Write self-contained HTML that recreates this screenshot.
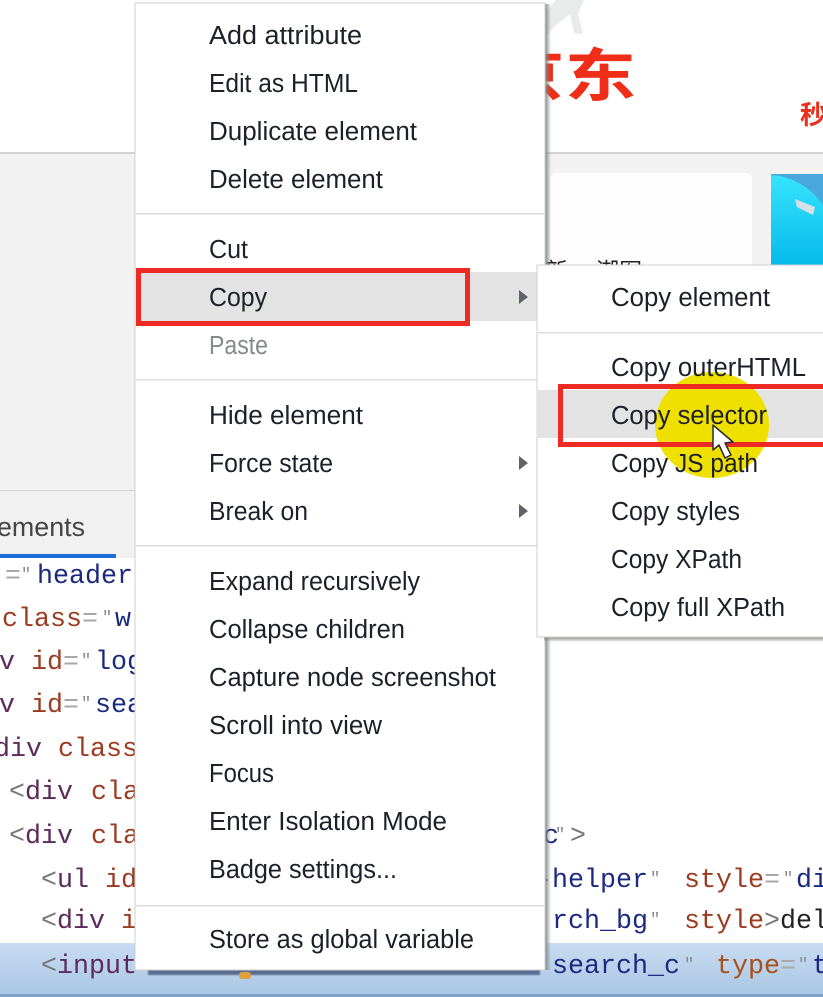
<!DOCTYPE html>
<html lang="zh">
<head>
<meta charset="utf-8">
<title>Copy selector</title>
<style>
html,body{margin:0;padding:0;background:#fff;width:823px;height:997px;overflow:hidden}
svg{display:block}
.m text{font-family:"Liberation Sans","Noto Sans CJK SC",sans-serif;font-size:25.5px;fill:#1c2028}
.c text{font-family:"Liberation Mono","DejaVu Sans Mono",monospace;font-size:26.67px;white-space:pre}
.r{fill:#9c3b22}.n{fill:#1b2a80}.g{fill:#a8a8a8}.p{fill:#5c2a5c}.k{fill:#777}.o{fill:#a8501c}.d{fill:#222}
.q{fill:#8a8a8a;font-size:17px}
</style>
</head>
<body>
<svg width="823" height="997" viewBox="0 0 823 997" xmlns="http://www.w3.org/2000/svg">
<defs>
<linearGradient id="sel" x1="0" y1="0" x2="0" y2="1"><stop offset="0" stop-color="#c8dcf2"/><stop offset="1" stop-color="#a9c5e2"/></linearGradient>
<linearGradient id="tile" x1="0" y1="0" x2="0" y2="1"><stop offset="0" stop-color="#37e4fc"/><stop offset="1" stop-color="#02b6e8"/></linearGradient>
<linearGradient id="sh" x1="0" y1="0" x2="1" y2="0"><stop offset="0" stop-color="#7f8785"/><stop offset="1" stop-color="#7f8785" stop-opacity="0"/></linearGradient>
<linearGradient id="shv" x1="0" y1="0" x2="0" y2="1"><stop offset="0" stop-color="#8a8a86"/><stop offset="1" stop-color="#8a8a86" stop-opacity="0"/></linearGradient>
<filter id="b"><feGaussianBlur stdDeviation="0.8"/></filter>
</defs>

<!-- page background -->
<rect width="823" height="997" fill="#fff"/>
<rect x="0" y="153" width="823" height="337" fill="#f2f2f3"/>
<rect x="0" y="152" width="823" height="2" fill="#d2d2d2"/>
<rect x="550" y="173" width="202" height="100" rx="6" fill="#fdfdfd"/>

<!-- logo -->
<path d="M556 0 L584 0 L578 14 L583 34 L574 33 L570 14 L556 25 L546 35 L546 12 Z" fill="#e9ebeb"/>
<text transform="translate(493 96) scale(1.12 0.9)" font-family="'Noto Sans CJK SC',sans-serif" font-size="64" font-weight="700" fill="#f02d16">京东</text>
<text x="800" y="124" font-family="'Noto Sans CJK SC',sans-serif" font-size="26" font-weight="700" fill="#e8301c">秒</text>

<!-- tile -->
<rect x="771" y="174" width="52" height="100" fill="url(#tile)"/>
<path d="M771 174 H823 V205 C812 188 792 176 771 175 Z" fill="#4aa6dc"/>
<path d="M795 199 L815 207 L813 215 L797 207 Z" fill="#d5dfe5"/>
<text x="545" y="279" font-family="'Noto Sans CJK SC',sans-serif" font-size="23" fill="#222">新 ·潮图</text>

<!-- devtools tab bar -->
<rect x="0" y="490" width="135" height="68" fill="#f1f1f2"/>
<rect x="0" y="490" width="135" height="1" fill="#d6d6d6"/>
<text x="-3" y="536" font-family="'Liberation Sans',sans-serif" font-size="27" fill="#444" textLength="88" lengthAdjust="spacingAndGlyphs">ements</text>
<rect x="0" y="554" width="116" height="5" fill="#1a6fd8"/>
<rect x="0" y="558" width="135" height="385" fill="#fff"/>

<!-- selected row -->
<rect x="0" y="943" width="823" height="54" fill="url(#sel)"/>
<rect x="0" y="994" width="823" height="3" fill="#7fa2c8"/>

<!-- code -->
<g class="c">
<text y="583"><tspan x="5" class="g">=</tspan><tspan x="21" dy="-4" class="q">"</tspan><tspan x="37" dy="4" class="n">header</tspan></text>
<text y="626"><tspan x="2" class="r">class</tspan><tspan x="82" class="g">=</tspan><tspan x="102" dy="-4" class="q">"</tspan><tspan x="115" dy="4" class="n">w</tspan></text>
<text y="669"><tspan x="-1" class="p">v</tspan><tspan x="31" class="r">id</tspan><tspan x="63" class="g">=</tspan><tspan x="81" dy="-4" class="q">"</tspan><tspan x="95" dy="4" class="n">log</tspan></text>
<text y="712"><tspan x="-1" class="p">v</tspan><tspan x="31" class="r">id</tspan><tspan x="63" class="g">=</tspan><tspan x="81" dy="-4" class="q">"</tspan><tspan x="95" dy="4" class="n">sea</tspan></text>
<text y="756"><tspan x="-6" class="p">div</tspan><tspan x="58" class="r">class</tspan></text>
<text y="799"><tspan x="9" class="k">&lt;</tspan><tspan x="25" class="p">div</tspan><tspan x="91" class="r">cla</tspan></text>
<text y="843"><tspan x="9" class="k">&lt;</tspan><tspan x="25" class="p">div</tspan><tspan x="91" class="r">cla</tspan></text>
<text y="887"><tspan x="41" class="k">&lt;</tspan><tspan x="57" class="p">ul</tspan><tspan x="105" class="r">id</tspan></text>
<text y="928"><tspan x="41" class="k">&lt;</tspan><tspan x="57" class="p">div</tspan><tspan x="121" class="r">i</tspan></text>
<text y="973"><tspan x="41" class="k">&lt;</tspan><tspan x="57" class="p">input</tspan></text>

<text y="843"><tspan x="543" class="n">c</tspan><tspan x="555" dy="-4" class="q">"</tspan><tspan x="570" dy="4" class="k">&gt;</tspan></text>
<text y="887"><tspan x="536" class="n">-helper</tspan><tspan x="650" dy="-4" class="q">"</tspan><tspan x="684" dy="4" class="r">style</tspan><tspan x="764" class="g">=</tspan><tspan x="783" dy="-4" class="q">"</tspan><tspan x="796" dy="4" class="n">di</tspan></text>
<text y="928"><tspan x="552" class="n">rch_bg</tspan><tspan x="650" dy="-4" class="q">"</tspan><tspan x="684" dy="4" class="r">style</tspan><tspan x="764" class="k">&gt;</tspan><tspan x="780" class="d">del</tspan></text>
<text y="973"><tspan x="552" class="n">search_c</tspan><tspan x="684" dy="-4" class="q">"</tspan><tspan x="716" dy="4" class="o">type</tspan><tspan x="780" class="g">=</tspan><tspan x="798" dy="-4" class="q">"</tspan><tspan x="812" dy="4" class="n">t</tspan></text>
</g>

<!-- smear under main menu -->
<rect x="148" y="969" width="392" height="6" fill="#5a6c90" filter="url(#b)"/>
<rect x="239" y="972" width="12" height="7" rx="3" fill="#e0a040"/>

<!-- main menu -->
<rect x="545" y="4" width="6" height="966" fill="url(#sh)"/>
<rect x="135" y="3" width="410" height="967" fill="#fff" stroke="#cfcfcf" stroke-width="1"/>
<rect x="136" y="272" width="401" height="49" fill="#e3e3e3"/>
<g fill="#dcdcdc">
<rect x="136" y="213" width="408" height="1.5"/>
<rect x="136" y="379" width="408" height="1.5"/>
<rect x="136" y="545" width="408" height="1.5"/>
<rect x="136" y="905" width="408" height="1.5"/>
</g>
<g class="m">
<text x="209" y="44" textLength="153" lengthAdjust="spacingAndGlyphs">Add attribute</text>
<text x="209" y="92" textLength="149" lengthAdjust="spacingAndGlyphs">Edit as HTML</text>
<text x="209" y="140" textLength="208" lengthAdjust="spacingAndGlyphs">Duplicate element</text>
<text x="209" y="188" textLength="174" lengthAdjust="spacingAndGlyphs">Delete element</text>
<text x="209" y="258" textLength="39" lengthAdjust="spacingAndGlyphs">Cut</text>
<text x="209" y="306" textLength="58" lengthAdjust="spacingAndGlyphs">Copy</text>
<text x="209" y="354" textLength="59" lengthAdjust="spacingAndGlyphs" style="fill:#85888c">Paste</text>
<text x="209" y="424" textLength="154" lengthAdjust="spacingAndGlyphs">Hide element</text>
<text x="209" y="472" textLength="124" lengthAdjust="spacingAndGlyphs">Force state</text>
<text x="209" y="520" textLength="99" lengthAdjust="spacingAndGlyphs">Break on</text>
<text x="209" y="590" textLength="211" lengthAdjust="spacingAndGlyphs">Expand recursively</text>
<text x="209" y="638" textLength="196" lengthAdjust="spacingAndGlyphs">Collapse children</text>
<text x="209" y="686" textLength="287" lengthAdjust="spacingAndGlyphs">Capture node screenshot</text>
<text x="209" y="734" textLength="173" lengthAdjust="spacingAndGlyphs">Scroll into view</text>
<text x="209" y="782" textLength="65" lengthAdjust="spacingAndGlyphs">Focus</text>
<text x="209" y="830" textLength="238" lengthAdjust="spacingAndGlyphs">Enter Isolation Mode</text>
<text x="209" y="878" textLength="188" lengthAdjust="spacingAndGlyphs">Badge settings...</text>
<text x="209" y="948" textLength="265" lengthAdjust="spacingAndGlyphs">Store as global variable</text>
</g>
<g fill="#5f6368">
<path d="M519 290 L528 297 L519 304 Z"/>
<path d="M519 456 L528 463 L519 470 Z"/>
<path d="M519 504 L528 511 L519 518 Z"/>
</g>
<rect x="138.500" y="270.500" width="329" height="53" fill="none" stroke="#ee2a24" stroke-width="5"/>

<!-- submenu -->
<rect x="544" y="637" width="279" height="5" fill="url(#shv)"/>
<rect x="537" y="265" width="290" height="372" fill="#fff" stroke="#cfcfcf" stroke-width="1"/>
<rect x="538" y="332" width="285" height="1.500" fill="#dcdcdc"/>
<rect x="538" y="390" width="285" height="48" fill="#e3e3e3"/>
<ellipse cx="712" cy="425" rx="57" ry="53" fill="#f0e000"/>
<rect x="560.500" y="386.500" width="270" height="58" fill="none" stroke="#ee2a24" stroke-width="5"/>
<g class="m">
<text x="611" y="306" textLength="159" lengthAdjust="spacingAndGlyphs">Copy element</text>
<text x="611" y="376" textLength="195" lengthAdjust="spacingAndGlyphs">Copy outerHTML</text>
<text x="611" y="424" textLength="156" lengthAdjust="spacingAndGlyphs">Copy selector</text>
<text x="611" y="472" textLength="147" lengthAdjust="spacingAndGlyphs">Copy JS path</text>
<text x="611" y="520" textLength="129" lengthAdjust="spacingAndGlyphs">Copy styles</text>
<text x="611" y="568" textLength="131" lengthAdjust="spacingAndGlyphs">Copy XPath</text>
<text x="611" y="616" textLength="174" lengthAdjust="spacingAndGlyphs">Copy full XPath</text>
</g>

<!-- cursor -->
<path d="M713 425 L713 450 L719 445 L725 458 L731 455 L725 443 L733 442 Z" fill="#fff" stroke="#2b2b2b" stroke-width="1.500" stroke-linejoin="round"/>
</svg>
</body>
</html>
